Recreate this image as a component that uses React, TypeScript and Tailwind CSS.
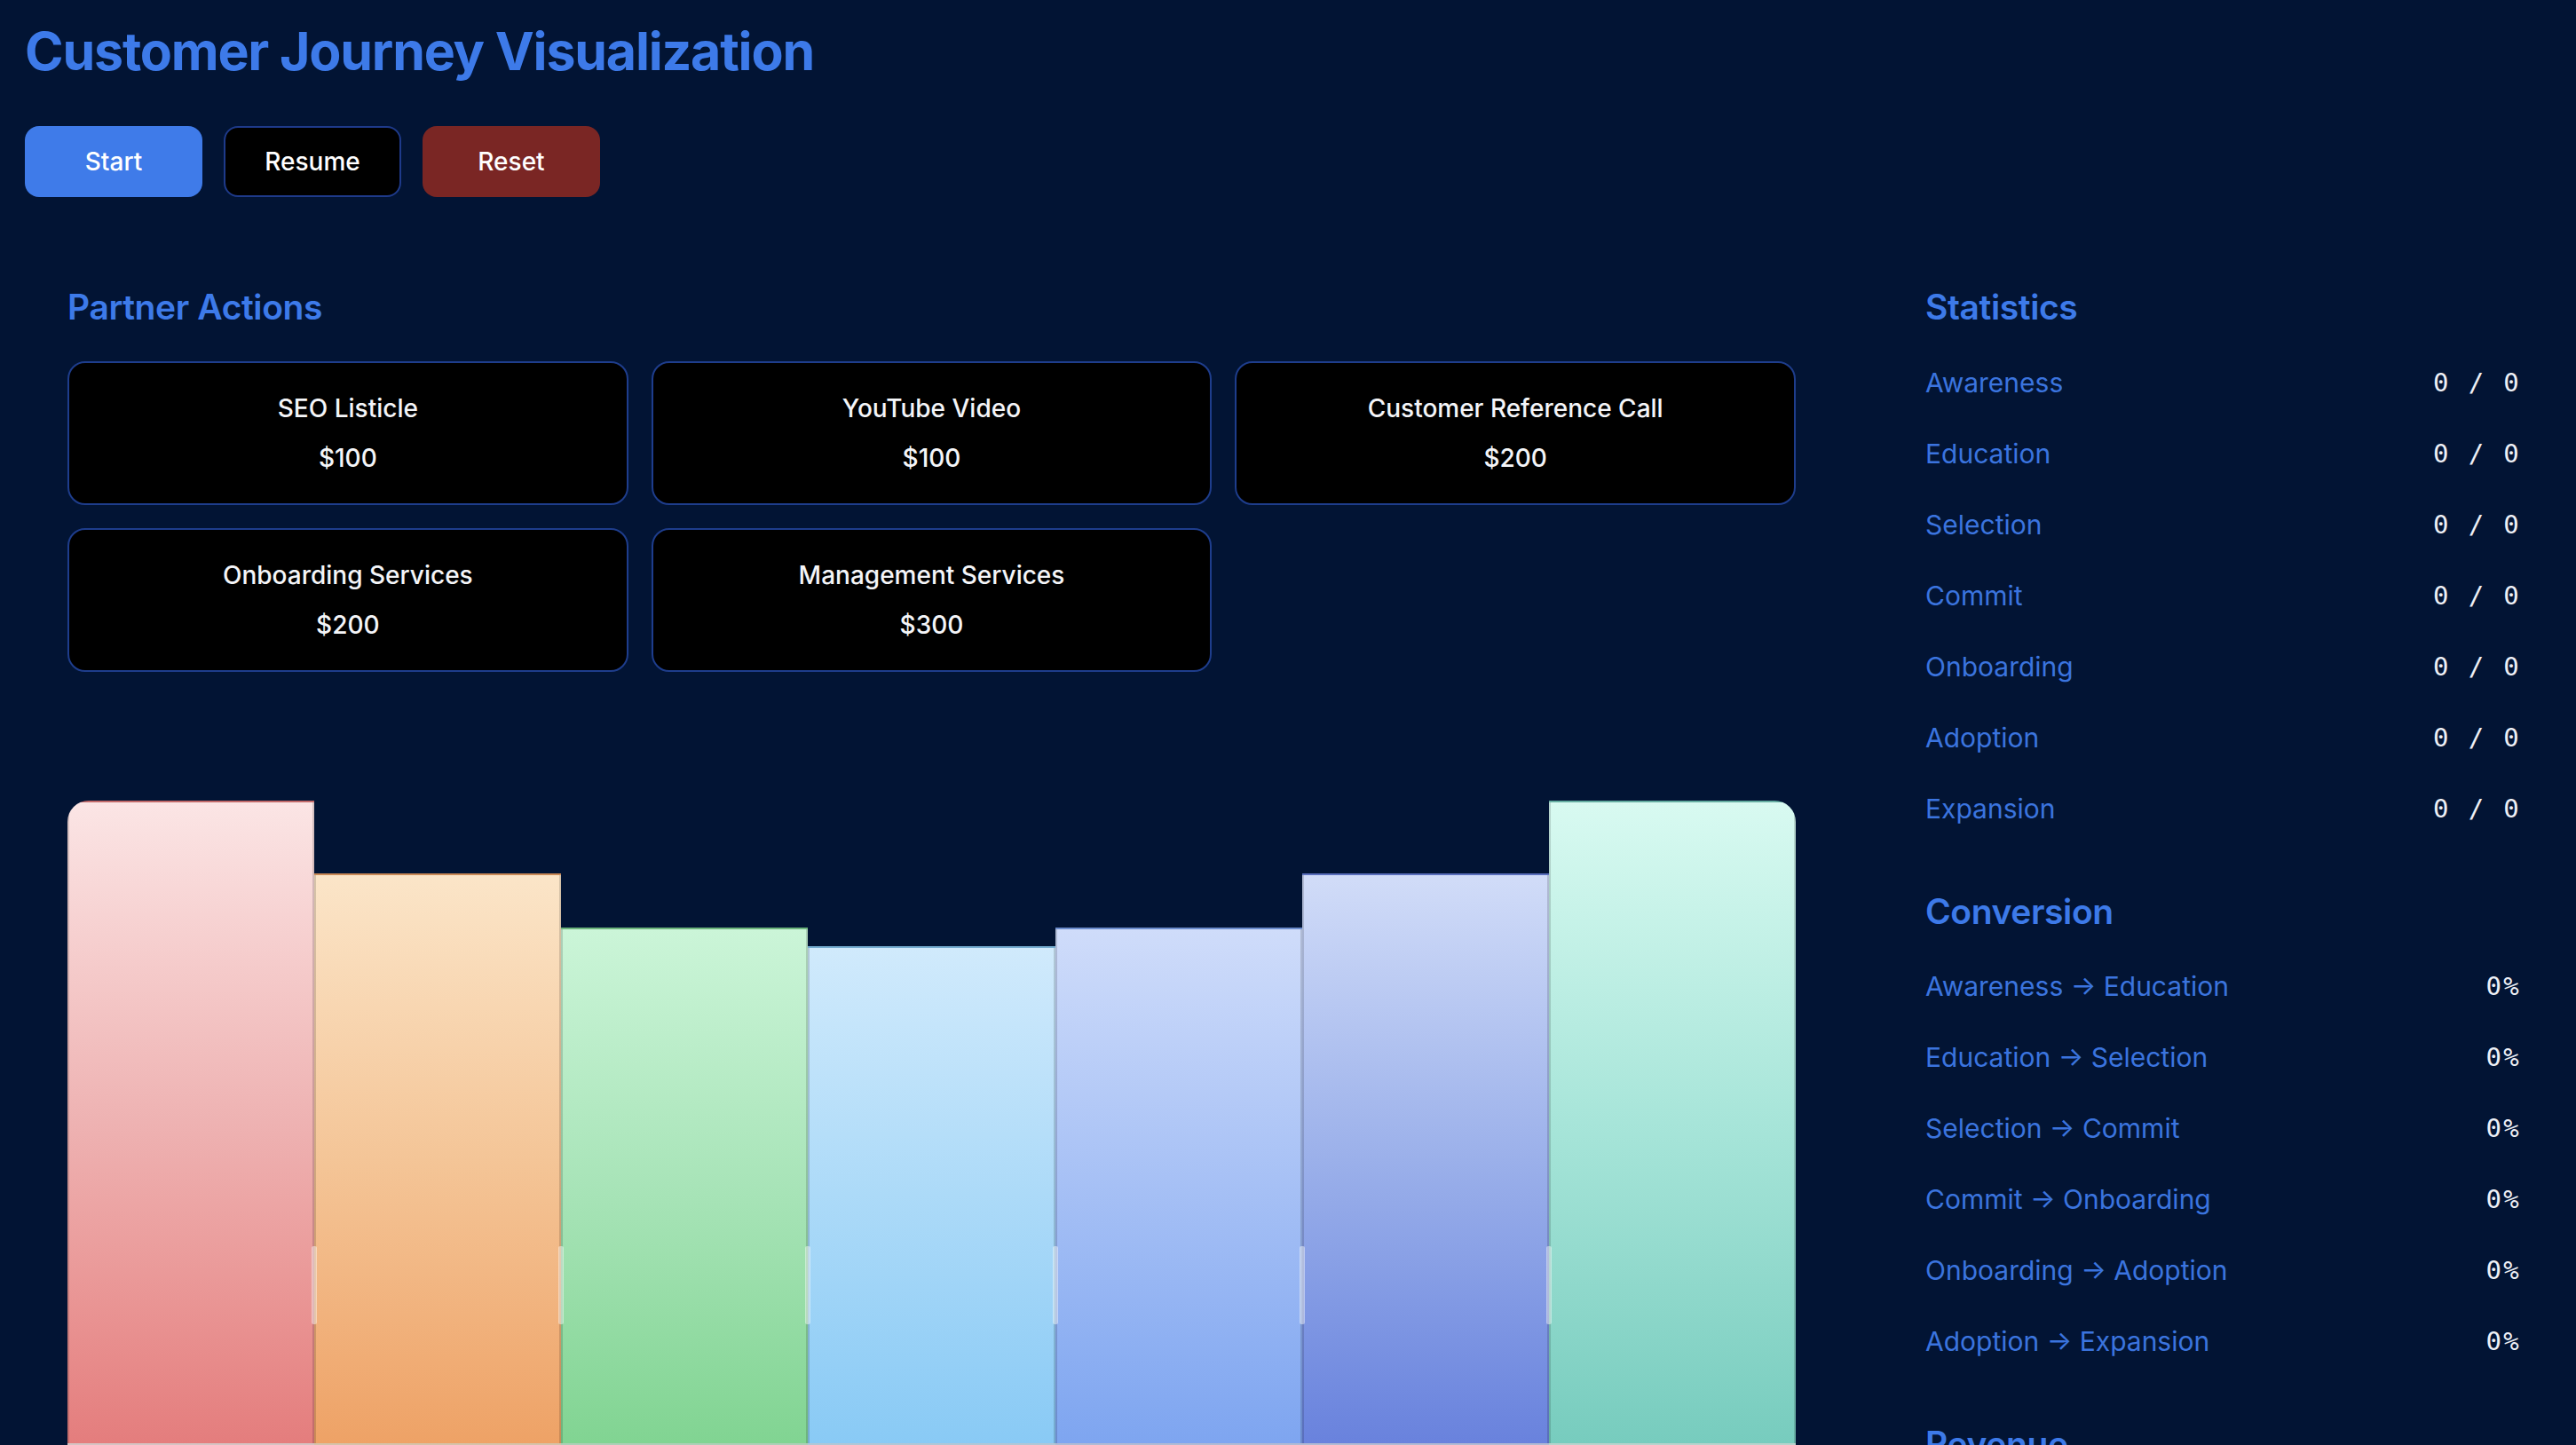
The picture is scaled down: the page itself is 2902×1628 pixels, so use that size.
import { type ReactNode } from "react";

const stages = ["Awareness", "Education", "Selection", "Commit", "Onboarding", "Adoption", "Expansion"];

const actions = [
  { name: "SEO Listicle", cost: 100 },
  { name: "YouTube Video", cost: 100 },
  { name: "Customer Reference Call", cost: 200 },
  { name: "Onboarding Services", cost: 200 },
  { name: "Management Services", cost: 300 },
];

// bar heights are px from the chart floor; gradients run top -> bottom
const bars = [
  { h: 726, cls: "from-[#fbe5e5] via-[#eeb2b2] to-[#e47d7d]" },
  { h: 644, cls: "from-[#fbe5c8] via-[#f4c597] to-[#eea266]" },
  { h: 583, cls: "from-[#cbf5d8] via-[#a8e4b8] to-[#81d492]" },
  { h: 562, cls: "from-[#d0eafc] via-[#acdaf8] to-[#89caf5]" },
  { h: 583, cls: "from-[#cfdcfa] via-[#a6c0f5] to-[#7ea5f0]" },
  { h: 644, cls: "from-[#d1dcf8] via-[#9bb0ea] to-[#6982dd]" },
  { h: 726, cls: "from-[#d8faf1] via-[#a7e5d9] to-[#77ccbe]" },
];

function SectionTitle({ children }: { children: ReactNode }) {
  return (
    <h2 className="m-0 text-[39px] leading-[48px] font-semibold tracking-[-0.01em] text-[#3d7ae9]">
      {children}
    </h2>
  );
}

function StatRow({ label, value }: { label: string; value: string }) {
  return (
    <div className="flex h-[80px] items-center justify-between">
      <span className="text-[30px] leading-[48px] text-[#3b74df]">{label}</span>
      <span
        className="text-[29px] leading-[40px] tracking-[0.08em] text-[#eef0f6]"
        style={{ fontFamily: '"DejaVu Sans Mono", "Liberation Mono", monospace' }}
      >
        {value}
      </span>
    </div>
  );
}

export default function App() {
  return (
    <div
      className="min-h-screen bg-[#021434] px-[28px] pt-[22px] pb-[48px] text-white"
      style={{ fontFamily: 'Inter, "Noto Sans", sans-serif' }}
    >
      <h1 className="m-0 text-[59px] leading-[72px] font-bold tracking-[-0.02em] text-[#3d7ae9]">
        Customer Journey Visualization
      </h1>

      <div className="mt-[48px] flex gap-[24px]">
        <button className="h-[80px] w-[200px] rounded-[16px] bg-[#3f7be9] text-[28px] font-medium text-white">
          Start
        </button>
        <button className="h-[80px] w-[200px] rounded-[16px] border-2 border-[#1e3a8a] bg-black text-[28px] font-medium text-white">
          Resume
        </button>
        <button className="h-[80px] w-[200px] rounded-[16px] bg-[#7a2624] text-[28px] font-medium text-white">
          Reset
        </button>
      </div>

      <div className="mt-[52px] flex">
        {/* left: partner actions + journey chart */}
        <section className="w-[2043px] shrink-0 px-[48px] pt-[48px]">
          <SectionTitle>Partner Actions</SectionTitle>

          <div className="mt-[37px] grid grid-cols-3 gap-[26px]">
            {actions.map((a) => (
              <div
                key={a.name}
                className="flex h-[162px] flex-col items-center justify-center gap-[16px] rounded-[20px] border-2 border-[#1e3d8c] bg-black"
              >
                <div className="text-[28px] leading-[40px] font-medium text-[#f4f5f8]">{a.name}</div>
                <div className="text-[28px] leading-[40px] font-medium text-[#f4f5f8]">${a.cost}</div>
              </div>
            ))}
          </div>

          <div className="mt-[145px] flex h-[726px] items-end overflow-hidden rounded-t-[24px]">
            {bars.map((b, i) => (
              <div
                key={i}
                className={`relative flex-1 border-2 border-black/15 bg-linear-to-b ${b.cls}`}
                style={{ height: b.h }}
              >
                {i > 0 && (
                  <div className="absolute bottom-[134px] -left-[5px] h-[88px] w-[6px] rounded-[2px] bg-white/45" />
                )}
              </div>
            ))}
          </div>
        </section>

        {/* right: statistics */}
        <aside className="flex-1 pl-[98px] pr-[34px] pt-[48px]">
          <SectionTitle>Statistics</SectionTitle>
          <div className="mt-[21px]">
            {stages.map((s) => (
              <StatRow key={s} label={s} value="0 / 0" />
            ))}
          </div>

          <div className="mt-[52px]">
            <SectionTitle>Conversion</SectionTitle>
            <div className="mt-[20px]">
              {stages.slice(0, -1).map((s, i) => (
                <StatRow key={s} label={`${s} → ${stages[i + 1]}`} value="0%" />
              ))}
            </div>
          </div>

          <div className="mt-[52px]">
            <SectionTitle>Revenue</SectionTitle>
            <div className="mt-[20px]">
              <StatRow label="Total Spend" value="$0" />
              <StatRow label="Total Revenue" value="$0" />
              <StatRow label="ROI" value="0%" />
            </div>
          </div>
        </aside>
      </div>
    </div>
  );
}
